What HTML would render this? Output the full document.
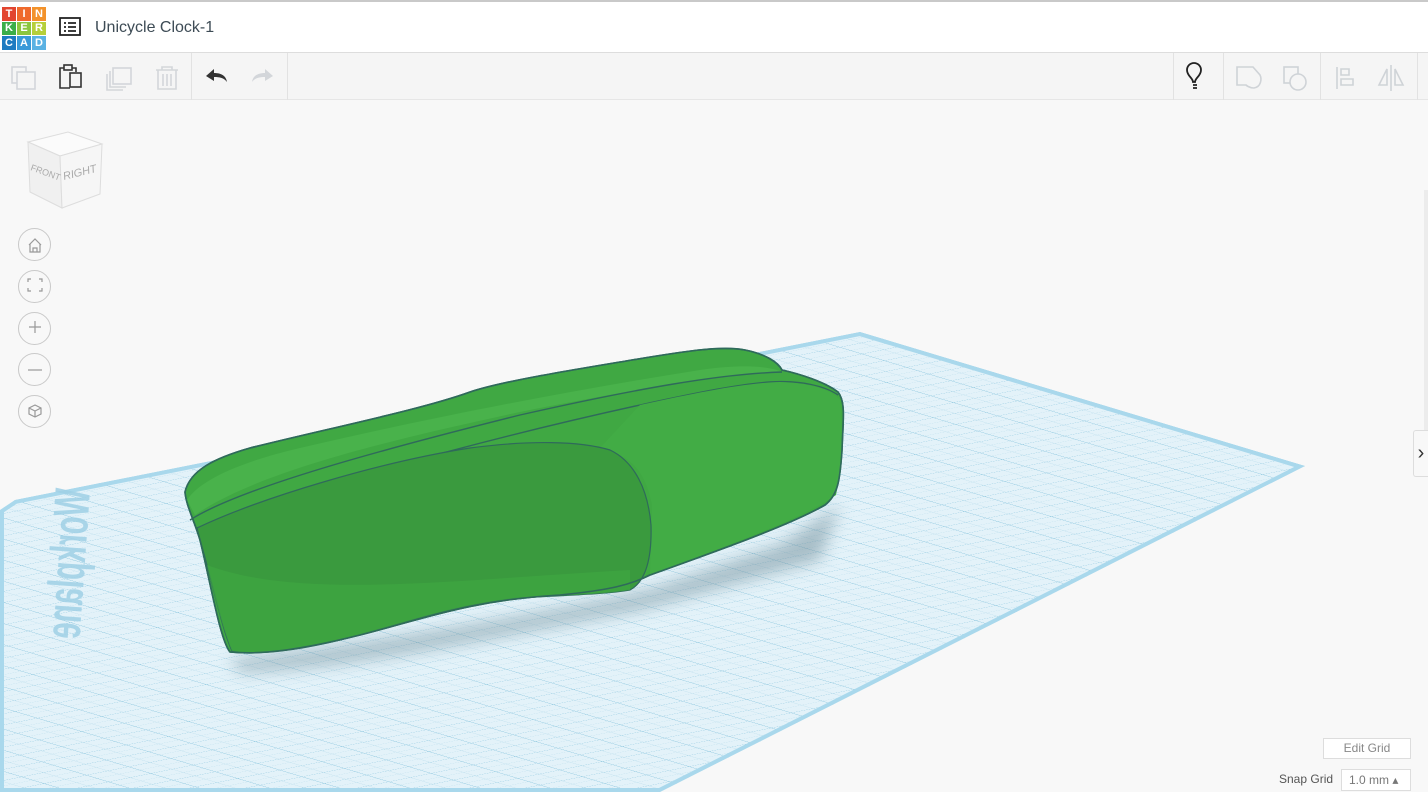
<!DOCTYPE html>
<html><head><meta charset="utf-8"><style>
*{margin:0;padding:0;box-sizing:border-box}
body{width:1428px;height:792px;overflow:hidden;background:#f8f8f8;font-family:"Liberation Sans",sans-serif;position:relative}
.top{position:absolute;left:0;top:0;width:1428px;height:53px;background:#fff;border-top:2px solid #c9c9c9;border-bottom:1px solid #ddd}
.tb{position:absolute;left:0;top:53px;width:1428px;height:47px;background:#f5f5f5;border-bottom:1px solid #e6e6e6}
.logo{position:absolute;left:2px;top:5px;width:43px;height:43px;display:grid;grid-template-columns:repeat(3,14px);gap:1px}
.logo span{display:flex;align-items:center;justify-content:center;color:#fff;font-size:11px;font-weight:bold}
.title{position:absolute;left:95px;top:17px;font-size:16px;color:#3d4b55}
.sep{position:absolute;top:0;width:1px;height:47px;background:#e2e2e2}
.circ{position:absolute;left:18px;width:33px;height:33px;border:1px solid #c9c9c9;border-radius:50%;background:#f8f8f8}
</style></head><body>
<svg style="position:absolute;left:0;top:0" width="1428" height="792">
<defs>
<pattern id="g" patternUnits="userSpaceOnUse" width="10" height="10" patternTransform="matrix(2.225,0.67,-4.225,0.84,860,332)">
<rect width="10" height="10" fill="#e3f2f9"/>
<path d="M5 0V10M0 5H10" stroke="#bfe0ee" stroke-width="0.2"/>
<path d="M0 0V10M0 0H10" stroke="#86c3dc" stroke-width="0.35"/>
</pattern>
<filter id="bl"><feGaussianBlur stdDeviation="8"/></filter>
<clipPath id="wp"><polygon points="15,500 860,332 1305,466 660,792 0,792 0,510"/></clipPath>
</defs>
<polygon points="15,500 860,332 1305,466 660,792 0,792 0,510" fill="url(#g)"/>
<polygon points="15,500 860,332 1305,466 660,792 0,792 0,510" fill="none" stroke="#a9d8ec" stroke-width="8" clip-path="url(#wp)"/>
<text transform="translate(90,490) rotate(94) scale(1,-1)" font-size="50" font-weight="bold" fill="#9fd0e6" opacity="0.85" font-family="Liberation Sans,sans-serif" textLength="150" lengthAdjust="spacingAndGlyphs">Workplane</text>
<path d="M230 660 C400 640 560 610 650 590 L780 545 L840 505 L820 560 L640 610 C480 640 340 670 240 672Z" fill="#6d8a96" opacity="0.5" filter="url(#bl)"/>
<path d="M185 492 C190 470 215 458 250 448 C330 428 420 410 470 392 C500 382 560 372 620 362 C680 352 720 345 745 350 C765 354 778 362 782 370 C800 374 825 382 838 392 C846 402 843 420 842 450 C840 480 838 495 825 505 C790 525 720 550 650 575 C630 585 610 590 560 595 C470 600 420 620 360 635 C300 650 260 655 230 652 C220 640 210 580 200 540 C194 520 186 505 185 492Z" fill="#40a843" stroke="#2f6a5b" stroke-width="1.6"/>
<path d="M187 500 C200 480 240 462 300 448 C420 420 560 392 700 370 C740 364 770 366 782 372 C720 375 620 392 520 412 C400 438 260 470 195 515Z" fill="#49b24b"/>
<path d="M190 520 C240 488 380 450 520 415 C640 388 720 374 782 372" fill="none" stroke="#2f6a5b" stroke-width="1.4"/>
<path d="M197 528 C300 490 480 440 640 405 C700 392 740 384 770 382 C800 380 825 386 838 395" fill="none" stroke="#2f6a5b" stroke-width="1.4"/>
<path d="M640 405 C700 392 745 383 780 382 C810 383 832 390 840 400 C843 430 842 470 836 495 C800 520 720 548 650 575 L652 505 C645 470 630 455 600 448Z" fill="#42ac45"/>
<path d="M197 528 C260 498 380 462 470 448 C530 440 580 441 610 450 C635 462 648 490 651 525 C652 560 645 582 630 590 C600 595 560 595 520 598 C450 605 400 625 340 640 C290 652 255 655 232 651 C222 630 212 580 200 540Z" fill="#3a9a3e" stroke="#2f6a5b" stroke-width="1.2"/>
<path d="M630 590 C600 595 560 595 520 598 C450 605 400 625 340 640 C290 652 255 655 232 651 C225 635 215 600 207 565 C300 600 450 580 630 570Z" fill="#3ea642" opacity="0.7"/>
<path d="M185 492 C190 470 215 458 250 448 C330 428 420 410 470 392 C500 382 560 372 620 362 C680 352 720 345 745 350 C765 354 778 362 782 370 C800 374 825 382 838 392 C846 402 843 420 842 450 C840 480 838 495 825 505 C790 525 720 550 650 575 C630 585 610 590 560 595 C470 600 420 620 360 635 C300 650 260 655 230 652 C220 640 210 580 200 540 C194 520 186 505 185 492Z" fill="none" stroke="#2f6a5b" stroke-width="1.6"/>
</svg>

<div class="top">
 <div class="logo">
  <span style="background:#e2452f">T</span><span style="background:#ef6a2c">I</span><span style="background:#f3922b">N</span>
  <span style="background:#3cae49">K</span><span style="background:#8cc63f">E</span><span style="background:#b6cf3a">R</span>
  <span style="background:#1e7bc1">C</span><span style="background:#3a9ad9">A</span><span style="background:#5bb2e3">D</span>
 </div>
 <svg style="position:absolute;left:59px;top:15px" width="22" height="20"><rect x="1" y="1" width="20" height="17" fill="none" stroke="#222" stroke-width="1.8"/><path d="M5 6h2M9 6h8M5 10h2M9 10h8M5 14h2M9 14h8" stroke="#222" stroke-width="1.8"/></svg>
 <div class="title">Unicycle Clock-1</div>
</div>
<div class="tb">
 <svg width="300" height="47" style="position:absolute;left:0;top:0">
  <g fill="none" stroke="#d3d6da" stroke-width="1.6"><rect x="12" y="14" width="14" height="16"/><rect x="17" y="19" width="18" height="17" fill="#f5f5f5"/></g>
  <g fill="none" stroke="#333" stroke-width="1.6"><path d="M64 15h-4v20h10M72 15h4v4"/><rect x="64" y="12" width="8" height="5"/><rect x="70" y="20" width="11" height="14"/></g>
  <g fill="none" stroke="#d3d6da" stroke-width="1.6"><rect x="113" y="15" width="18" height="16"/><path d="M110 18v16h16M107 21v16h16"/></g>
  <g fill="none" stroke="#d3d6da" stroke-width="1.6"><path d="M156 17h22M162 17v-3h10v3M158 17v19h18V17M163 21v12M167 21v12M171 21v12"/></g>
  <path d="M206 23l8-7v4c6 0 12 2 13 9-3-4-7-5-13-5v4z" fill="#333"/>
  <path d="M273 23l-8-7v4c-6 0-12 2-13 9 3-4 7-5 13-5v4z" fill="#d3d6da"/>
 </svg>
 <div class="sep" style="left:191px"></div><div class="sep" style="left:287px"></div>
 <div class="sep" style="left:1173px"></div><div class="sep" style="left:1223px"></div><div class="sep" style="left:1320px"></div><div class="sep" style="left:1417px"></div>
 <svg width="260" height="47" style="position:absolute;left:1168px;top:0">
  <g fill="none" stroke="#222" stroke-width="1.8"><path d="M25 29c0-4-6-6-6-12a7 7 0 0 1 14 0c0 6-6 8-6 12z"/><path d="M25 32h4M25 35h4"/></g>
  <g fill="none" stroke="#cfd3d7" stroke-width="1.6"><path d="M69 14h16l7 8c2 4 1 12-6 13-5 0-8-3-8-3h-9z"/><rect x="116" y="14" width="14" height="16"/><circle cx="130" cy="29" r="8" fill="#f5f5f5"/><path d="M169 14v22M173 16h8v6h-8zM173 26h12v6h-12z"/><path d="M223 12v26M219 16l-8 16h8zM227 16l8 16h-8z"/></g>
 </svg>
</div>

<svg style="position:absolute;left:24px;top:128px" width="80" height="84">
 <polygon points="4,14 44,4 78,16 36,28" fill="#fbfbfb" stroke="#ddd"/>
 <polygon points="4,14 36,28 38,80 6,64" fill="#f0f0f0" stroke="#ddd"/>
 <polygon points="36,28 78,16 76,66 38,80" fill="#f6f6f6" stroke="#ddd"/>
 <text x="6" y="42" font-size="9" fill="#aaa" transform="rotate(20 6 42)">FRONT</text>
 <text x="40" y="52" font-size="11" fill="#aaa" font-style="italic" transform="rotate(-14 40 52)">RIGHT</text>
</svg>
<div class="circ" style="top:228px"></div><div class="circ" style="top:270px"></div><div class="circ" style="top:312px"></div><div class="circ" style="top:353px"></div><div class="circ" style="top:395px"></div>
<svg style="position:absolute;left:18px;top:228px" width="34" height="200" fill="none" stroke="#999" stroke-width="1.2">
 <path d="M11 17l6-6 6 6M12 16v8h10v-8M15 24v-4h4v4"/>
 <path d="M10 54v-3h3M21 51h3v3M24 60v3h-3M13 63h-3v-3"/>
 <path d="M17 93v12M11 99h12"/>
 <path d="M10 142h14"/>
 <path d="M17 177l6 3v6l-6 3-6-3v-6zM11 180l6 3 6-3M17 183v6"/>
</svg>

<div style="position:absolute;left:1413px;top:430px;width:15px;height:47px;background:#f8f8f8;border:1px solid #ddd;border-right:none;border-radius:3px 0 0 3px;font-size:20px;color:#333;text-align:center;line-height:44px">&#x203A;</div>
<div style="position:absolute;left:1424px;top:190px;width:4px;height:240px;background:#ececec"></div>

<div style="position:absolute;left:1323px;top:738px;width:88px;height:21px;background:#fff;border:1px solid #ddd;font-size:12px;color:#888;text-align:center;line-height:19px">Edit Grid</div>
<div style="position:absolute;left:1279px;top:772px;font-size:12px;color:#555">Snap Grid</div>
<div style="position:absolute;left:1341px;top:769px;width:70px;height:22px;background:#fff;border:1px solid #ddd;font-size:12px;color:#777;line-height:20px;padding-left:7px">1.0 mm &#x25B4;</div>
</body></html>
